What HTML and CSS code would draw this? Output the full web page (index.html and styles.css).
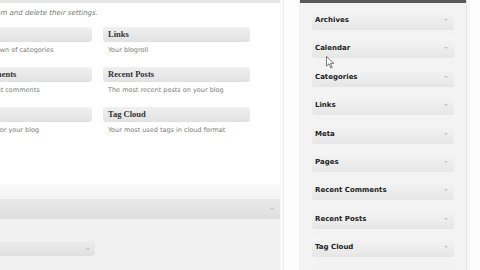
FILE: index.html
```html
<!DOCTYPE html>
<html>
<head>
<meta charset="utf-8">
<link rel="stylesheet" href="styles.css">
</head>
<body>
<div class="page">
  <div class="main">
    <div class="avail">
      <div class="topstrip"></div>
      <p class="intro">them and delete their settings.</p>
      <div class="grid">
        <div class="widget"><div class="wbar">Categories</div><div class="wdesc">A list or dropdown of categories</div></div>
        <div class="widget"><div class="wbar">Links</div><div class="wdesc">Your blogroll</div></div>
        <div class="widget"><div class="wbar">Recent Comments</div><div class="wdesc">The most recent comments</div></div>
        <div class="widget"><div class="wbar">Recent Posts</div><div class="wdesc">The most recent posts on your blog</div></div>
        <div class="widget"><div class="wbar">Search</div><div class="wdesc">A search form for your blog</div></div>
        <div class="widget"><div class="wbar">Tag Cloud</div><div class="wdesc">Your most used tags in cloud format</div></div>
      </div>
    </div>
    <div class="shade"></div>
    <div class="inactive">
      <div class="ibar"><span class="arrow"></span></div>
      <div class="ibody">
        <div class="select"><span class="arrow"></span></div>
      </div>
    </div>
  </div>
  <div class="gutter"></div>
  <div class="sidebar">
    <div class="sbtop"></div>
    <div class="sblist">
      <div class="sitem"><span>Archives</span><span class="arrow"></span></div>
      <div class="sitem"><span>Calendar</span><span class="arrow"></span></div>
      <div class="sitem"><span>Categories</span><span class="arrow"></span></div>
      <div class="sitem"><span>Links</span><span class="arrow"></span></div>
      <div class="sitem"><span>Meta</span><span class="arrow"></span></div>
      <div class="sitem"><span>Pages</span><span class="arrow"></span></div>
      <div class="sitem"><span>Recent Comments</span><span class="arrow"></span></div>
      <div class="sitem"><span>Recent Posts</span><span class="arrow"></span></div>
      <div class="sitem"><span>Tag Cloud</span><span class="arrow"></span></div>
      <div class="sitem"><span>Text</span><span class="arrow"></span></div>
    </div>
  </div>
  <div class="edge"></div>
</div>
<svg class="cursor" width="9" height="13" viewBox="0 0 9 13"><path d="M0.5 0.5 L0.5 10 L3 7.8 L4.8 12 L6.2 11.4 L4.4 7.3 L7.8 7.3 Z" fill="#fff" stroke="#555" stroke-width="0.8"/></svg>
</body>
</html>
```

FILE: styles.css
```css
html, body {
  margin: 0;
  padding: 0;
  width: 480px;
  height: 270px;
  overflow: hidden;
  background: #fafafa;
}
.page {
  display: flex;
  width: 480px;
  height: 270px;
  overflow: hidden;
  font-family: "DejaVu Sans", Verdana, sans-serif;
}
.main {
  width: 280px;
  flex: none;
  display: flex;
  flex-direction: column;
  background: #f1f1f1;
  overflow: hidden;
}
.avail {
  background: #fff;
  height: 184px;
  flex: none;
  overflow: hidden;
}
.topstrip {
  height: 3px;
  background: #e6e6e6;
}
.intro {
  margin: 6px 0 0 -11px;
  font-size: 7px;
  font-style: italic;
  color: #777;
  white-space: nowrap;
  line-height: 8px;
}
.grid {
  display: grid;
  grid-template-columns: 147px 147px;
  column-gap: 11px;
  row-gap: 12px;
  margin: 10px 0 0 -55px;
}
.widget {
  display: flex;
  flex-direction: column;
  gap: 4px;
}
.wbar {
  height: 15px;
  line-height: 15px;
  padding-left: 5px;
  border-radius: 3px;
  background: linear-gradient(#f0f0f0, #e2e2e2);
  font-family: "Liberation Serif", "Times New Roman", serif;
  font-weight: bold;
  font-size: 8.5px;
  color: #333;
  white-space: nowrap;
}
.wdesc {
  padding-left: 5px;
  font-size: 6.5px;
  line-height: 9px;
  color: #7a7a7a;
  white-space: nowrap;
}
.shade {
  height: 15px;
  flex: none;
  background: linear-gradient(#fbfbfb, #f3f3f3);
}
.inactive {
  flex: 1;
  display: flex;
  flex-direction: column;
}
.ibar {
  height: 20px;
  flex: none;
  background: linear-gradient(#e9e9e9, #dedede);
  display: flex;
  justify-content: flex-end;
  align-items: center;
  padding-right: 6px;
}
.ibody {
  padding-top: 22px;
}
.select {
  width: 95px;
  height: 15px;
  background: linear-gradient(#ececec, #dfdfdf);
  border-radius: 0 3px 3px 0;
  display: flex;
  justify-content: flex-end;
  align-items: center;
  padding-right: 5px;
  box-sizing: border-box;
}
.arrow {
  width: 0;
  height: 0;
  border-left: 2px solid transparent;
  border-right: 2px solid transparent;
  border-top: 2px solid #c4c4c4;
}
.gutter {
  flex: none;
  background: #fdfdfd;
  box-sizing: border-box;
  border-left: 1px solid #ececec;
  border-right: 1px solid #f0f0f0;
  margin-left: 3px;
  width: 17px;
}
.sidebar {
  width: 167px;
  flex: none;
  display: flex;
  flex-direction: column;
  background: #f3f3f3;
  box-sizing: border-box;
  border-right: 1px solid #e4e4e4;
}
.sbtop {
  height: 3px;
  background: #5a5a5a;
  flex: none;
}
.sblist {
  display: flex;
  flex-direction: column;
  gap: 8.4px;
  padding: 7px 12px 0 12px;
}
.sitem {
  height: 20px;
  flex: none;
  display: flex;
  justify-content: space-between;
  align-items: center;
  padding: 0 6px 0 3px;
  background: linear-gradient(#f5f5f5, #e6e6e6);
  border-radius: 2px;
  font-weight: bold;
  font-size: 7px;
  color: #222;
  white-space: nowrap;
}
.edge {
  flex: 1;
  background: #fdfdfd;
  border-left: 3px solid #f6f6f6;
}
.cursor {
  position: absolute;
  left: 326px;
  top: 56px;
}
```
